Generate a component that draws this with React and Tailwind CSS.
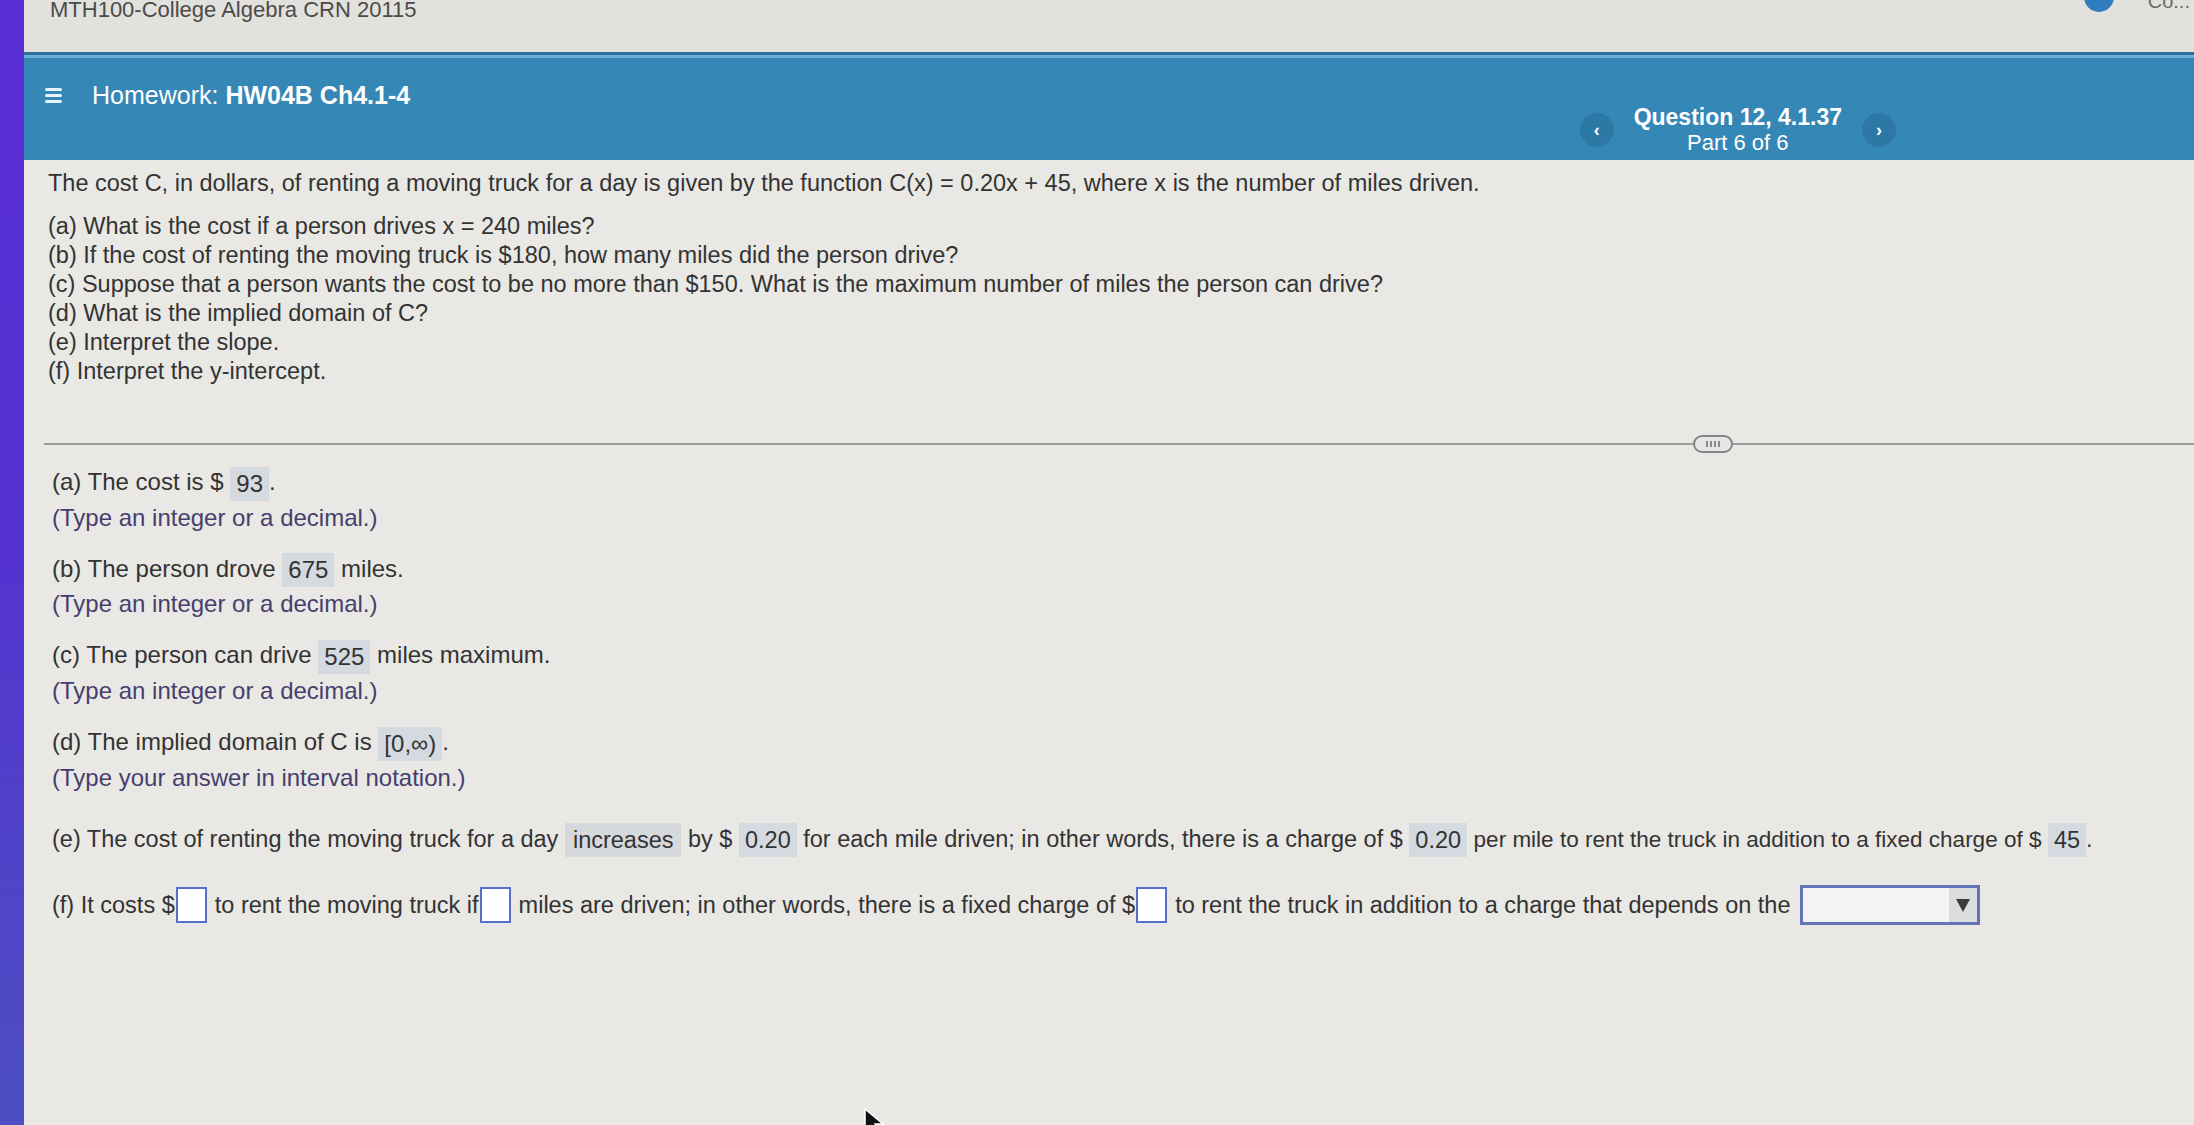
import React from "react";

function Ans({ children, className = "" }) {
  return (
    <span
      className={`inline-block h-[34px] leading-[34px] px-[6px] bg-[#d4dae0] align-middle ${className}`}
    >
      {children}
    </span>
  );
}

function Box() {
  return (
    <span className="inline-block w-[31px] h-[36px] border-2 border-[#5470d0] bg-white align-middle mx-[1px]" />
  );
}

export default function App() {
  return (
    <div className="flex w-full h-[1125px] overflow-hidden bg-[#e9e8e4] text-[#333333] font-['Liberation_Sans',Arial,sans-serif] relative">
      <div className="w-[24px] shrink-0 bg-gradient-to-b from-[#5a2ed6] via-[#5433d0] to-[#4c4ec2]" />
      <div className="flex-1 min-w-0 flex flex-col">
        {/* top band */}
        <div className="h-[52px] bg-[#e3e1dd] relative">
          <div className="pl-[26px] -mt-[5px] text-[22px] leading-[30px] text-[#4a4a4a] whitespace-nowrap">
            MTH100-College Algebra CRN 20115
          </div>
          <div className="absolute top-[-18px] right-[80px] w-[30px] h-[30px] rounded-full bg-[#2f7cc0]" />
          <div className="absolute top-[-14px] right-[4px] text-[20px] text-[#6a6a6a]">Co...</div>
        </div>

        {/* blue header */}
        <div className="h-[108px] bg-[#3587b6] border-t-[3px] border-[#2b6e9b] flex flex-col">
          <div className="h-[3px] bg-[#69afd6]" />
          <div className="flex-1 flex items-start">
            <div className="flex items-center pl-[21px] pt-[22px]">
              <div className="flex flex-col gap-[3px] w-[17px]">
                <span className="h-[3px] bg-[#e8f4fb] rounded" />
                <span className="h-[3px] bg-[#e8f4fb] rounded" />
                <span className="h-[3px] bg-[#e8f4fb] rounded" />
              </div>
              <div className="ml-[30px] text-[25px] leading-[30px] text-white whitespace-nowrap">
                Homework: <span className="font-bold">HW04B Ch4.1-4</span>
              </div>
            </div>
            <div className="ml-auto mr-[298px] flex items-center pt-[46px]">
              <div className="w-[34px] h-[34px] rounded-full bg-[#2e78a6] flex items-center justify-center text-white text-[18px] font-bold">
                ‹
              </div>
              <div className="mx-[20px] flex flex-col items-center text-white leading-[26px]">
                <span className="text-[23px] font-bold whitespace-nowrap">Question 12, 4.1.37</span>
                <span className="text-[22px] whitespace-nowrap">Part 6 of 6</span>
              </div>
              <div className="w-[34px] h-[34px] rounded-full bg-[#2e78a6] flex items-center justify-center text-white text-[18px] font-bold">
                ›
              </div>
            </div>
          </div>
        </div>

        {/* content */}
        <div className="flex-1 flex flex-col text-[23.5px]">
          <div className="pl-[24px] pt-[9px] leading-[29px] whitespace-nowrap">
            The cost C, in dollars, of renting a moving truck for a day is given by the function C(x) = 0.20x + 45, where x is the number of miles driven.
          </div>
          <div className="pl-[24px] mt-[14px] leading-[29px] whitespace-nowrap flex flex-col">
            <span>(a) What is the cost if a person drives x = 240 miles?</span>
            <span>(b) If the cost of renting the moving truck is $180, how many miles did the person drive?</span>
            <span>(c) Suppose that a person wants the cost to be no more than $150. What is the maximum number of miles the person can drive?</span>
            <span>(d) What is the implied domain of C?</span>
            <span>(e) Interpret the slope.</span>
            <span>(f) Interpret the y-intercept.</span>
          </div>

          <div className="relative ml-[20px] mt-[57px] h-[2px] bg-[#9b9b9b]">
            <div className="absolute left-[1649px] top-[-8px] w-[40px] h-[18px] rounded-full border-2 border-[#858585] bg-[#e6e6e6] flex items-center justify-center gap-[2px]">
              <span className="w-[2px] h-[6px] bg-[#8a8a8a]" />
              <span className="w-[2px] h-[6px] bg-[#8a8a8a]" />
              <span className="w-[2px] h-[6px] bg-[#8a8a8a]" />
              <span className="w-[2px] h-[6px] bg-[#8a8a8a]" />
            </div>
          </div>

          <div className="pl-[28px] pt-[20px] leading-[34px] whitespace-nowrap flex flex-col">
            <div className="text-[24px]">
              (a) The cost is $ <Ans>93</Ans>.
            </div>
            <div className="text-[24px] text-[#463f6e]">(Type an integer or a decimal.)</div>

            <div className="mt-[17px] text-[24px]">
              (b) The person drove <Ans>675</Ans> miles.
            </div>
            <div className="text-[24px] text-[#463f6e]">(Type an integer or a decimal.)</div>

            <div className="mt-[17px] text-[24px]">
              (c) The person can drive <Ans>525</Ans> miles maximum.
            </div>
            <div className="text-[24px] text-[#463f6e]">(Type an integer or a decimal.)</div>

            <div className="mt-[17px] text-[24px]">
              (d) The implied domain of C is <Ans>[0,∞)</Ans>.
            </div>
            <div className="text-[24px] text-[#463f6e]">(Type your answer in interval notation.)</div>

            <div className="mt-[27px]">
              (e) The cost of renting the moving truck for a day <Ans className="bg-[#d5d9dc] px-[8px]">increases</Ans> by ${" "}
              <Ans>0.20</Ans> for each mile driven; in other words, there is a charge of $ <Ans>0.20</Ans>{" "}
              <span className="text-[22.5px]">per mile to rent the truck in addition to a fixed charge of $</span> <Ans>45</Ans>.
            </div>

            <div className="mt-[28px] flex items-center">
              <span>(f) It costs $</span>
              <Box />
              <span className="ml-[7px]">to rent the moving truck if</span>
              <Box />
              <span className="ml-[7px]">miles are driven; in other words, there is a fixed charge of $</span>
              <Box />
              <span className="ml-[7px]">to rent the truck in addition to a charge that depends on the</span>
              <span className="ml-[10px] inline-flex w-[180px] h-[40px] border-[3px] border-[#6473b8] bg-[#f4f4f2] justify-end">
                <span className="w-[28px] h-full bg-[#dcdcdc] flex items-center justify-center">
                  <svg width="16" height="16" viewBox="0 0 16 16">
                    <path d="M1 2 H15 L8 15 Z" fill="#3a3a3a" />
                  </svg>
                </span>
              </span>
            </div>
          </div>
        </div>
      </div>
      <svg className="absolute left-[864px] top-[1108px]" width="22" height="30" viewBox="0 0 22 30">
        <path d="M1 1 L1 24 L7 18 L12 29 L16 27 L11 16 L19 16 Z" fill="#111" stroke="#fff" strokeWidth="1.5" />
      </svg>
    </div>
  );
}
